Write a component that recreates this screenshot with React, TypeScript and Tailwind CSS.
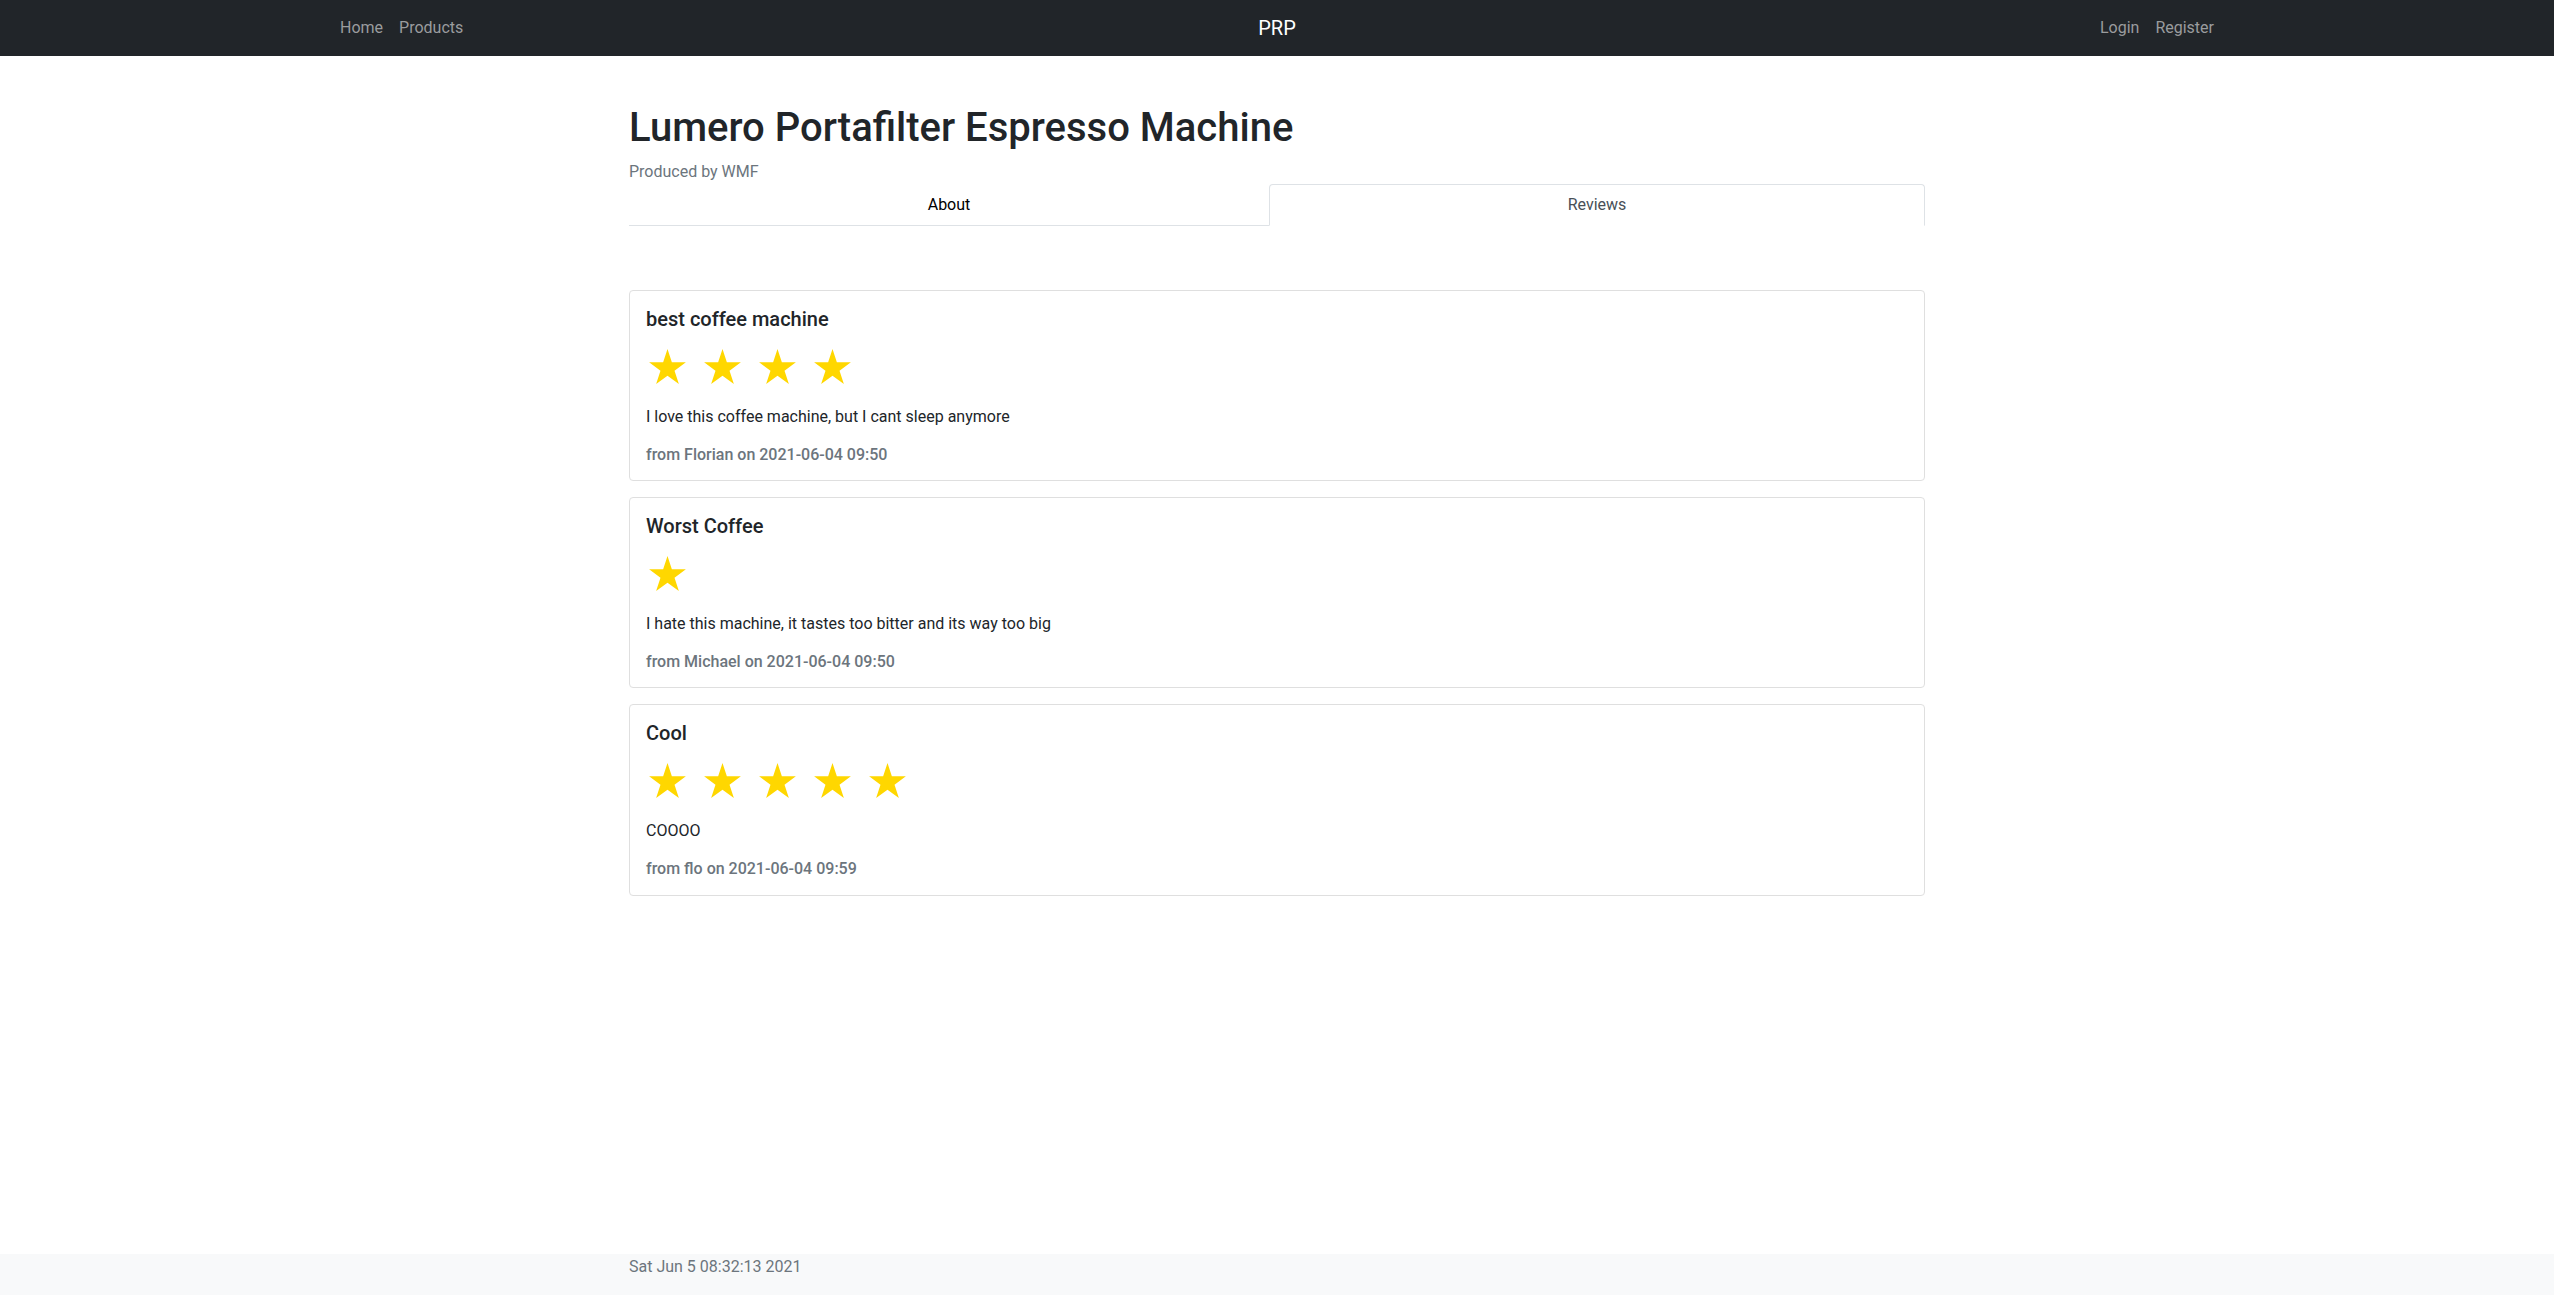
const REVIEWS = [
  {
    title: "best coffee machine",
    stars: 4,
    text: "I love this coffee machine, but I cant sleep anymore",
    by: "from Florian on 2021-06-04 09:50",
  },
  {
    title: "Worst Coffee",
    stars: 1,
    text: "I hate this machine, it tastes too bitter and its way too big",
    by: "from Michael on 2021-06-04 09:50",
  },
  {
    title: "Cool",
    stars: 5,
    text: "COOOO",
    by: "from flo on 2021-06-04 09:59",
  },
];

function Star() {
  return (
    <svg width="37" height="35" viewBox="0 0 37 35.2" className="shrink-0">
      <polygon
        fill="#ffd700"
        points="18.5,0 22.87,13.44 37,13.44 25.57,21.75 29.93,35.19 18.5,26.88 7.07,35.19 11.43,21.75 0,13.44 14.13,13.44"
      />
    </svg>
  );
}

function Navbar() {
  return (
    <nav className="h-[56px] bg-[#212529]">
      <div className="mx-auto grid h-full w-[1890px] grid-cols-3 items-center">
        <ul className="flex">
          <li>
            <a className="block px-2 leading-6 text-[#9a9c9e]">Home</a>
          </li>
          <li>
            <a className="block px-2 leading-6 text-[#9a9c9e]">Products</a>
          </li>
        </ul>
        <div className="text-center text-[20px] leading-[30px] text-white">PRP</div>
        <ul className="flex justify-end">
          <li>
            <a className="block px-2 leading-6 text-[#9a9c9e]">Login</a>
          </li>
          <li>
            <a className="block px-2 leading-6 text-[#9a9c9e]">Register</a>
          </li>
        </ul>
      </div>
    </nav>
  );
}

export default function App() {
  return (
    <div
      className="flex min-h-screen flex-col bg-white text-[16px] text-[#212529]"
      style={{ fontFamily: "Roboto, 'Noto Sans', sans-serif" }}
    >
      <Navbar />
      <main className="flex-1">
        <div className="mx-auto w-[1320px] px-3 pt-12">
          <h1 className="mb-2 text-[40px] font-medium leading-[48px]">
            Lumero Portafilter Espresso Machine
          </h1>
          <p className="leading-6 text-[#6c757d]">Produced by WMF</p>

          <ul className="flex border-b border-[#dee2e6]">
            <li className="-mb-px flex-auto">
              <a className="block border border-transparent px-4 py-2 text-center leading-6 text-black">
                About
              </a>
            </li>
            <li className="-mb-px flex-auto">
              <a className="block rounded-t-[4px] border border-[#dee2e6] border-b-white bg-white px-4 py-2 text-center leading-6 text-[#495057]">
                Reviews
              </a>
            </li>
          </ul>

          <div className="mt-16">
            {REVIEWS.map((r) => (
              <div
                key={r.title}
                className="mb-4 rounded-[4px] border border-[#dfdfdf] bg-white p-4"
              >
                <h5 className="mb-2 text-[20px] font-medium leading-6">{r.title}</h5>
                <div className="mb-2 flex h-[58px] items-start gap-[18px] pl-[3px] pt-[10px]">
                  {Array.from({ length: r.stars }).map((_, i) => (
                    <Star key={i} />
                  ))}
                </div>
                <p className="mb-4 leading-6">{r.text}</p>
                <h6 className="font-medium leading-[1.2] text-[#6c757d]">{r.by}</h6>
              </div>
            ))}
          </div>
        </div>
      </main>
      <footer className="h-[41px] bg-[#f8f9fa]">
        <div className="mx-auto w-[1320px] px-3 pt-px leading-6 text-[#6c757d]">
          Sat Jun 5 08:32:13 2021
        </div>
      </footer>
    </div>
  );
}
